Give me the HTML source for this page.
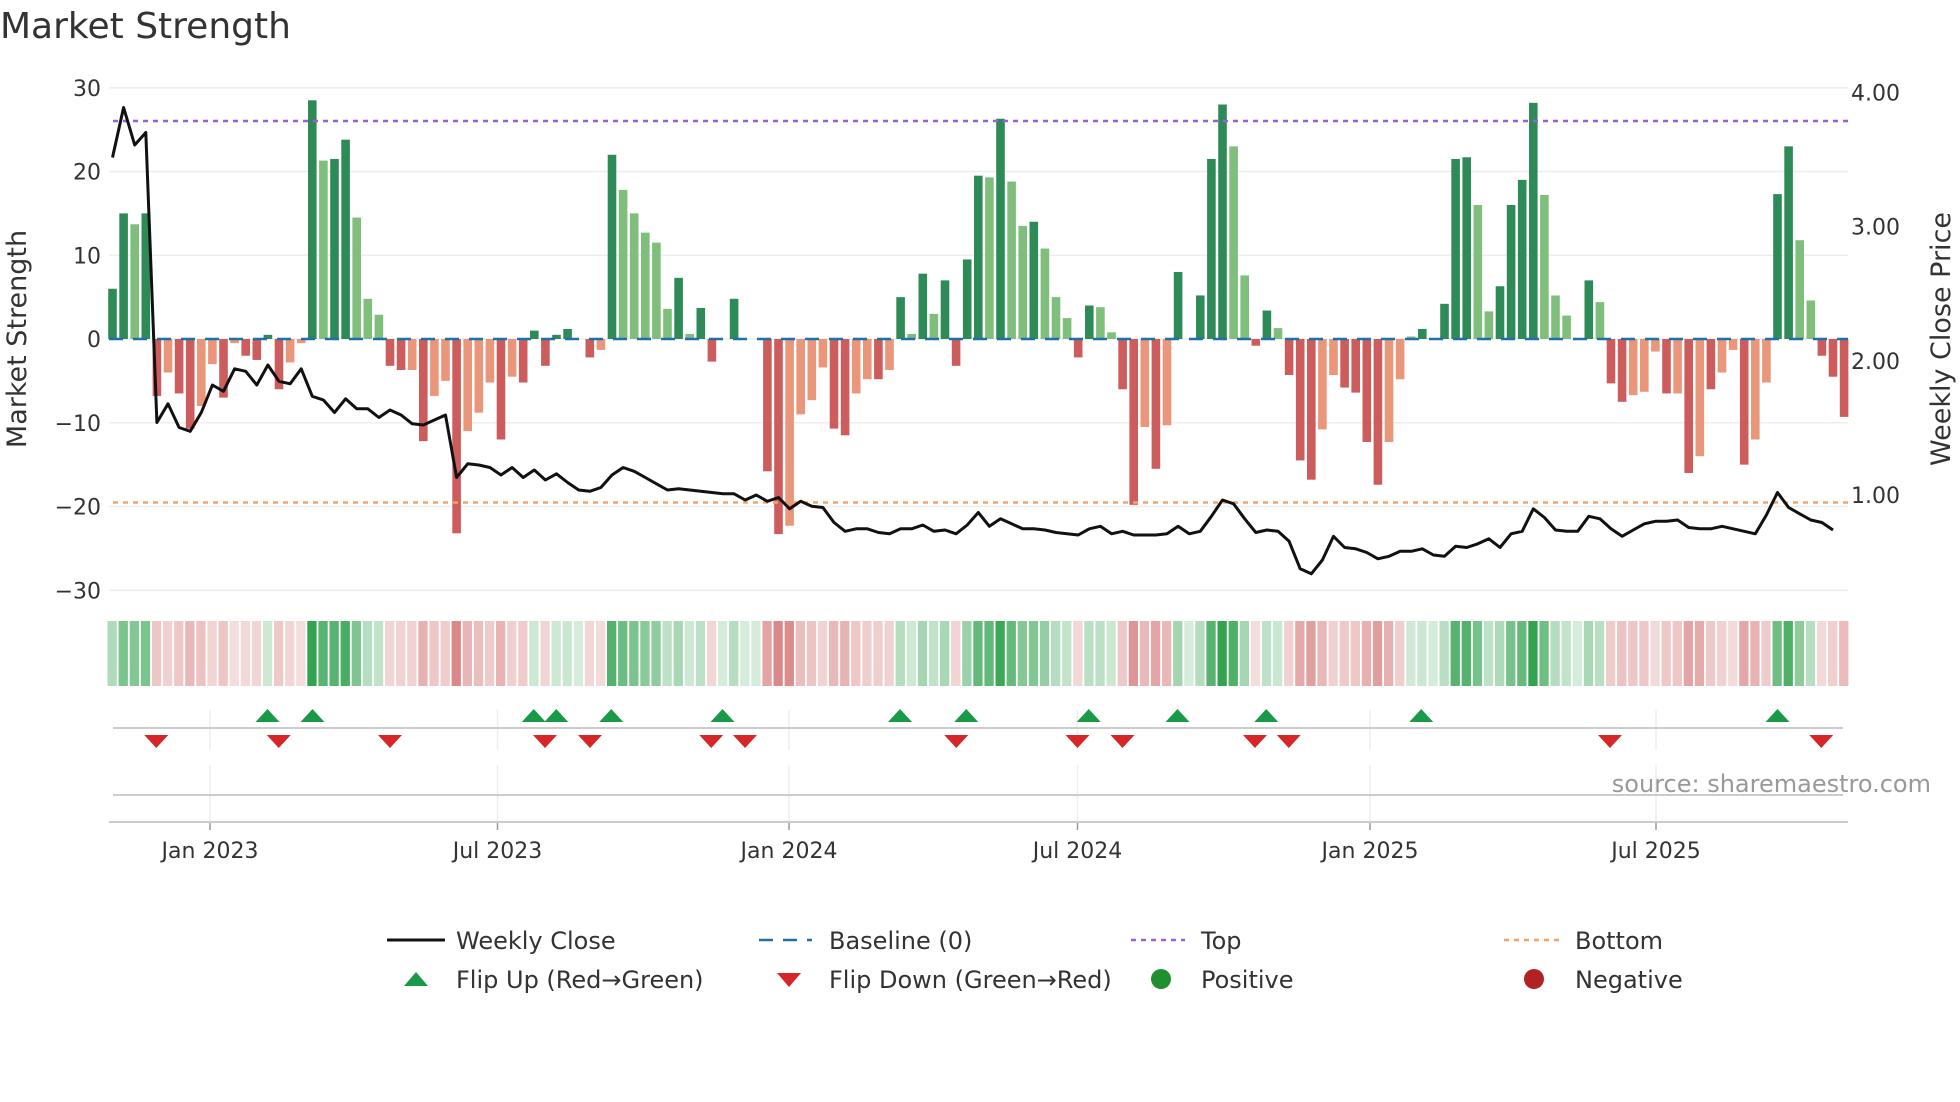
<!DOCTYPE html>
<html><head><meta charset="utf-8"><style>
html,body{margin:0;padding:0;background:#fff;width:1960px;height:1102px;overflow:hidden}
svg{display:block}
text{font-family:"DejaVu Sans","Liberation Sans",sans-serif;fill:#333}
</style></head><body>
<svg id="s" width="1960" height="1102" xmlns="http://www.w3.org/2000/svg">
<text x="0" y="38" font-size="36" fill="#333">Market Strength</text>
<g id="grid"></g>
<g id="bars"></g>
<g id="lines"></g>
<g id="strip"></g>
<g id="marks"></g>
<text x="1931" y="792" font-size="24" text-anchor="end" style="fill:#999">source: sharemaestro.com</text>
<text transform="translate(26,339) rotate(-90)" font-size="27" text-anchor="middle">Market Strength</text>
<text transform="translate(1950,339) rotate(-90)" font-size="27" text-anchor="middle">Weekly Close Price</text>
<g id="legend" font-size="24">
<line x1="387" y1="940" x2="445" y2="940" stroke="#111" stroke-width="3"/>
<text x="456" y="949">Weekly Close</text>
<line x1="759" y1="940" x2="812" y2="940" stroke="#1f6fa8" stroke-width="2.5" stroke-dasharray="14,10"/>
<text x="829" y="949">Baseline (0)</text>
<line x1="1131" y1="940" x2="1185" y2="940" stroke="#9b5fd6" stroke-width="2.5" stroke-dasharray="5,5"/>
<text x="1201" y="949">Top</text>
<line x1="1504" y1="940" x2="1559" y2="940" stroke="#f0a56a" stroke-width="2.5" stroke-dasharray="5,5"/>
<text x="1575" y="949">Bottom</text>
<polygon points="404,986 428,986 416,972" fill="#1a9a48"/>
<text x="456" y="988">Flip Up (Red→Green)</text>
<polygon points="777,973 801,973 789,987" fill="#d62728"/>
<text x="829" y="988">Flip Down (Green→Red)</text>
<circle cx="1161" cy="979" r="10" fill="#1f8f2f"/>
<text x="1201" y="988">Positive</text>
<circle cx="1534" cy="979" r="10" fill="#b22222"/>
<text x="1575" y="988">Negative</text>
</g>
</svg>
<script>
var NS="http://www.w3.org/2000/svg";
function el(p,t,a,txt){var e=document.createElementNS(NS,t);for(var k in a)e.setAttribute(k,a[k]);if(txt!=null)e.textContent=txt;document.getElementById(p).appendChild(e);return e;}
var L=109,R=1848,y0=339,pu=8.375;
function vy(v){return y0-v*pu;}
[30,20,10,0,-10,-20,-30].forEach(function(v){el("grid","line",{x1:L,x2:R,y1:vy(v),y2:vy(v),stroke:"#eeeeee","stroke-width":1.5});el("grid","text",{x:101,y:vy(v)+8,"font-size":22,"text-anchor":"end"},v<0?"\u2212"+(-v):""+v);});
[4,3,2,1].forEach(function(p){var y=92.5+(4-p)*134.2;el("grid","text",{x:1851,y:y+8,"font-size":22},p.toFixed(2));});
var ticks=[[210,"Jan 2023"],[497.5,"Jul 2023"],[789,"Jan 2024"],[1077.5,"Jul 2024"],[1370,"Jan 2025"],[1656,"Jul 2025"]];
ticks.forEach(function(t){el("grid","line",{x1:t[0],x2:t[0],y1:710,y2:750,stroke:"#eee","stroke-width":1.5});el("grid","line",{x1:t[0],x2:t[0],y1:765,y2:822,stroke:"#eee","stroke-width":1.5});el("grid","line",{x1:t[0],x2:t[0],y1:822,y2:830,stroke:"#999","stroke-width":1.5});el("grid","text",{x:t[0],y:858,"font-size":22,"text-anchor":"middle"},t[1]);});
el("grid","line",{x1:113,x2:1843,y1:728,y2:728,stroke:"#ccc","stroke-width":2});
el("grid","line",{x1:113,x2:1843,y1:795,y2:795,stroke:"#ccc","stroke-width":2});
el("grid","line",{x1:L,x2:R,y1:822,y2:822,stroke:"#ccc","stroke-width":2});
var D=[[6,1],[15,1],[13.7,0],[15,1],[-6.8,1],[-4,0],[-6.5,1],[-10.7,1],[-8,0],[-3,0],[-7,1],[-0.5,0],[-2,1],[-2.5,1],[0.5,1],[-6,1],[-2.8,0],[-0.5,0],[28.5,1],[21.3,0],[21.5,1],[23.8,1],[14.5,0],[4.8,0],[2.9,0],[-3.2,1],[-3.7,1],[-3.7,0],[-12.2,1],[-6.8,0],[-5,0],[-23.2,1],[-11,0],[-8.8,0],[-5.2,0],[-12,1],[-4.5,0],[-5.2,1],[1,1],[-3.2,1],[0.5,1],[1.2,1],[0,0],[-2.2,1],[-1.3,0],[22,1],[17.8,0],[15,0],[12.7,0],[11.5,0],[3.6,0],[7.3,1],[0.6,0],[3.7,1],[-2.7,1],[0,0],[4.8,1],[0,0],[0,0],[-15.8,1],[-23.3,1],[-22.3,0],[-9,0],[-7.3,0],[-3.4,0],[-10.7,1],[-11.5,1],[-6.5,0],[-4.8,0],[-4.8,1],[-3.7,0],[5,1],[0.6,0],[7.8,1],[3,0],[7,1],[-3.2,1],[9.5,1],[19.5,1],[19.3,0],[26.3,1],[18.8,0],[13.5,0],[14,1],[10.8,0],[5,0],[2.5,0],[-2.2,1],[4,1],[3.8,0],[0.8,0],[-6,1],[-19.8,1],[-10.5,0],[-15.5,1],[-10.3,0],[8,1],[0,0],[5.2,1],[21.5,1],[28,1],[23,0],[7.6,0],[-0.8,1],[3.4,1],[1.3,0],[-4.3,1],[-14.5,1],[-16.8,1],[-10.8,0],[-4.3,0],[-5.8,1],[-6.4,1],[-12.3,1],[-17.4,1],[-12.3,0],[-4.8,0],[0.3,0],[1.2,1],[0,0],[4.2,1],[21.5,1],[21.7,1],[16,0],[3.3,0],[6.3,1],[16,1],[19,1],[28.2,1],[17.2,0],[5.2,0],[2.8,0],[0,0],[7,1],[4.4,0],[-5.3,1],[-7.5,1],[-6.7,0],[-6.3,0],[-1.5,0],[-6.5,1],[-6.5,0],[-16,1],[-14,0],[-6,1],[-4,0],[-1.3,0],[-15,1],[-12,0],[-5.2,0],[17.3,1],[23,1],[11.8,0],[4.6,0],[-2,1],[-4.5,1],[-9.3,1]];
var P=[126,86,116,106,338,323,342,345,330,308,313,295,297,308,292,305,307,295,317,320,330,319,327,327,334,328,332,339,340,336,332,382,371,372,374,380,374,382,376,384,379,386,392,393,390,380,374,377,382,387,392,391,392,393,394,395,395,400,396,401,398,407,401,405,406,418,425,423,423,426,427,423,423,420,425,424,427,420,410,421,415,419,423,423,424,426,427,428,423,421,427,425,428,428,428,427,421,427,425,413,400,403,415,426,424,425,433,455,459,448,429,438,439,442,447,445,441,441,439,444,445,437,438,435,431,438,427,425,407,414,424,425,425,413,415,423,429,424,419,417,417,416,422,423,423,421,423,425,427,412,394,406,411,416,418,424];
var step=11.1,x0=112.5;
function cx(i){return x0+i*step;}
D.forEach(function(d,i){var v=d[0],x=cx(i);if(v==0)return;var c=v>0?(d[1]?"#2e8b57":"#7fbf7b"):(d[1]?"#cd5c5c":"#e9967a");var y=Math.min(vy(v),y0),h=Math.abs(v)*pu;el("bars","rect",{x:x-4.3,y:y,width:8.6,height:h,fill:c});});
D.forEach(function(d,i){var v=d[0],x=cx(i);var m=Math.min(Math.abs(v)/28,1);var col=v>0?"rgba(44,160,74,"+(0.22+0.75*m)+")":(v<0?"rgba(200,80,80,"+(0.18+0.6*m)+")":"rgba(44,160,74,0.2)");el("strip","rect",{x:x-5,y:621,width:9.3,height:65,fill:col});});
el("lines","line",{x1:L,x2:R,y1:y0,y2:y0,stroke:"#1f6fa8","stroke-width":2.5,"stroke-dasharray":"14,10"});
el("lines","line",{x1:113,x2:R,y1:121,y2:121,stroke:"#9b5fd6","stroke-width":2.5,"stroke-dasharray":"5,5"});
el("lines","line",{x1:113,x2:R,y1:502.5,y2:502.5,stroke:"#f0a56a","stroke-width":2.5,"stroke-dasharray":"5,5"});
var pts=P.map(function(y,i){return cx(i).toFixed(1)+","+(y*1.25).toFixed(1);}).join(" ");
el("lines","polyline",{points:pts,fill:"none",stroke:"#111","stroke-width":3,"stroke-linejoin":"round"});
[214,250,427,445,489,578,720,773,871,942,1013,1137,1422].forEach(function(x){x*=1.25;el("marks","polygon",{points:(x-12)+",722 "+(x+12)+",722 "+x+",709",fill:"#1a9a48"});});
[125,223,312,436,472,569,596,765,862,898,1004,1031,1288,1457].forEach(function(x){x*=1.25;el("marks","polygon",{points:(x-12)+",735 "+(x+12)+",735 "+x+",748",fill:"#d62728"});});
</script>
</body></html>
